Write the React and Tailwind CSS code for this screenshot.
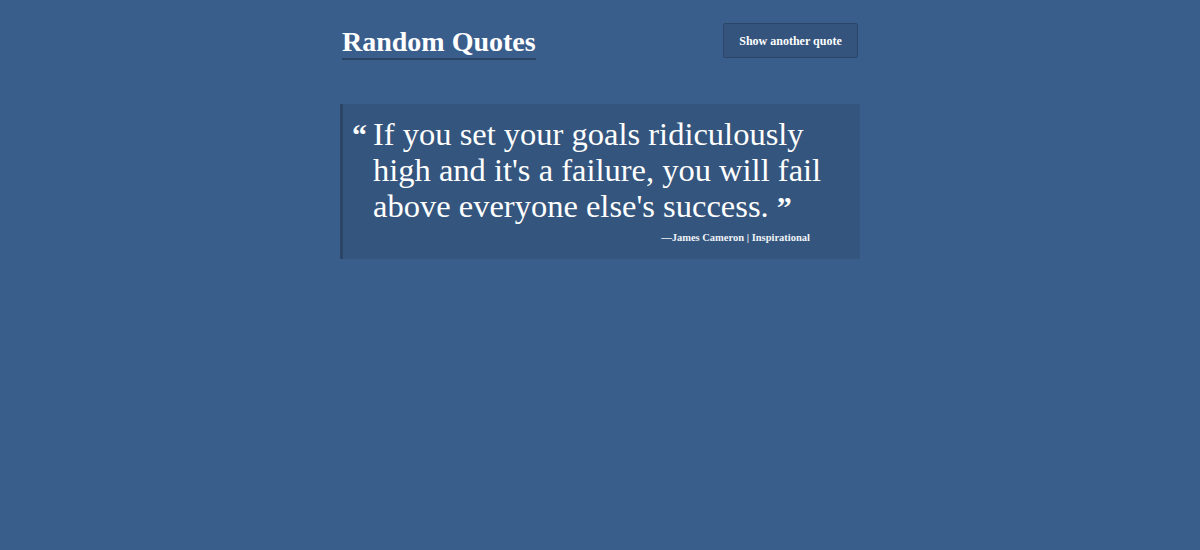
export default function App() {
  return (
    <div className="min-h-[550px] w-full bg-[#3a5e8c] font-['Liberation_Serif',serif] text-white">
      <div className="mx-auto w-[520px] pt-[23px]">
        <header className="flex items-start justify-between">
          <h1 className="ml-[2px] mt-[3px] border-b-2 border-[#2b4465] pb-[1px] text-[28px] font-bold leading-[31px]">
            Random Quotes
          </h1>
          <button
            type="button"
            className="mr-[2px] h-[35px] w-[135px] rounded-[2px] border border-[#2c4669] bg-[#34547d] text-[12px] font-bold text-white"
          >
            Show another quote
          </button>
        </header>

        <blockquote className="mt-[44px] border-l-[3px] border-[#2c4466] bg-[#34557d] pb-[14px] pl-[9px] pr-[28px] pt-[12px]">
          <div className="flex">
            <span className="mr-[6px] mt-[1px] text-[30px] font-bold leading-[36px]">“</span>
            <p className="text-[32.5px] leading-[36px]">
              If you set your goals ridiculously high and it's a failure, you will fail above everyone else's success.{" "}
              <span className="text-[30px] font-bold leading-none">”</span>
            </p>
          </div>
          <p className="mr-[22px] mt-[7px] text-right text-[10.5px] font-bold leading-[14px] text-[#eef2f7]">
            —James Cameron | Inspirational
          </p>
        </blockquote>
      </div>
    </div>
  );
}
